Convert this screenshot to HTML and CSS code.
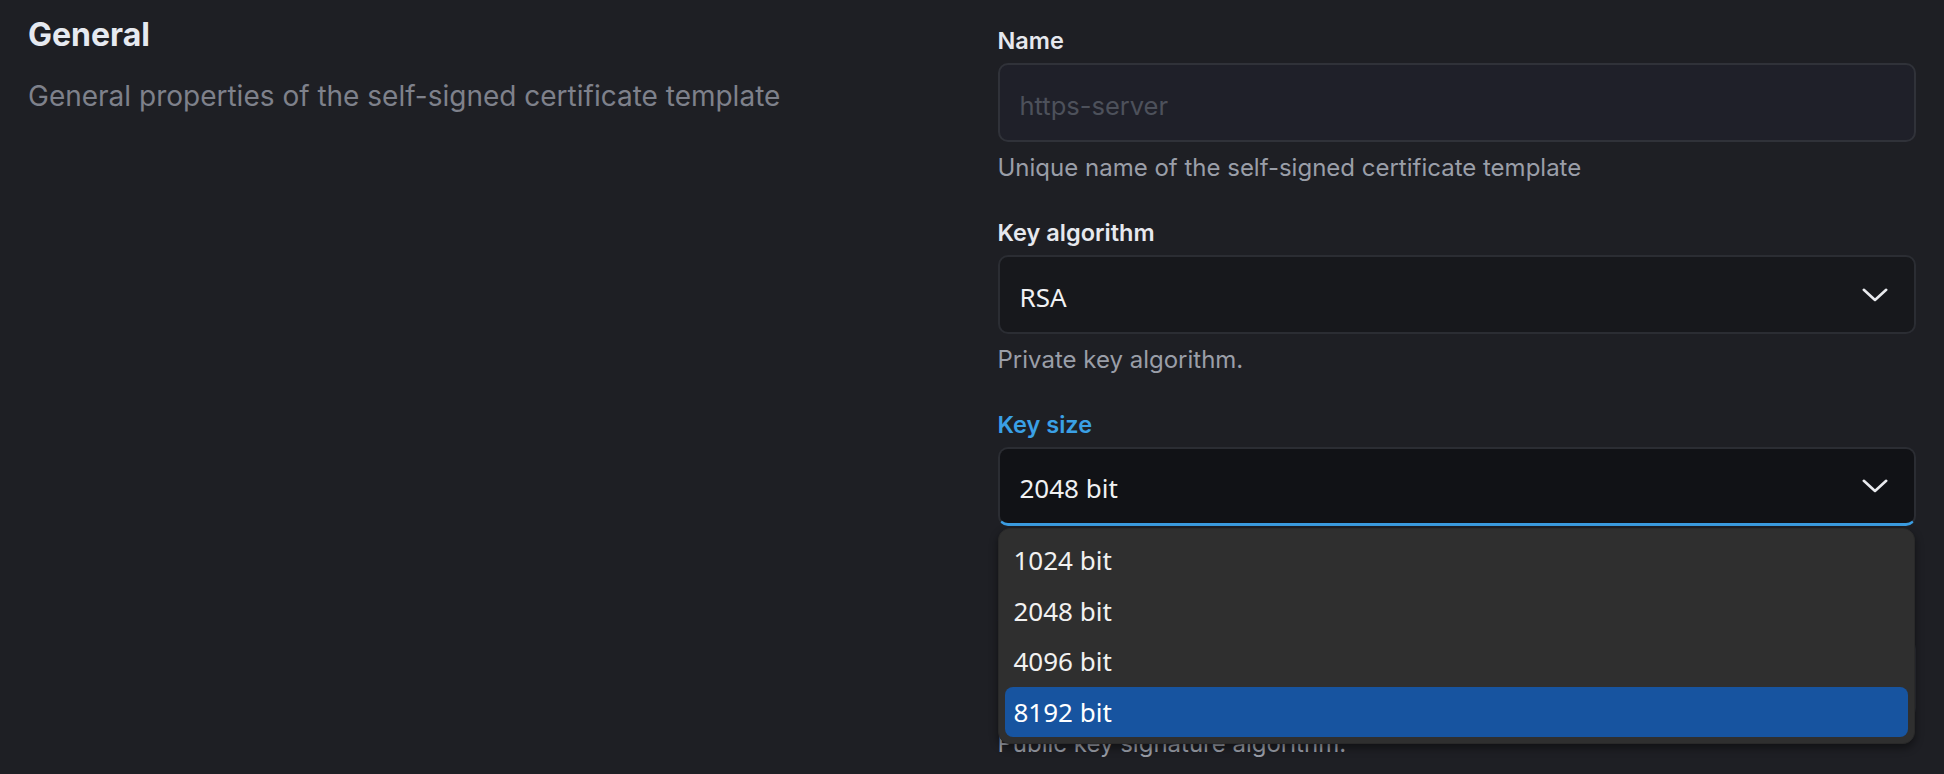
FILE: index.html
```html
<!DOCTYPE html>
<html lang="en">
<head>
<meta charset="utf-8">
<title>Self-signed certificate template</title>
<link rel="stylesheet" href="styles.css">
</head>
<body>
<div class="page">
  <section class="intro">
    <h2 class="title">General</h2>
    <p class="subtitle">General properties of the self-signed certificate template</p>
  </section>
  <section class="form">
    <div class="field">
      <label class="label">Name</label>
      <div class="input"><span class="placeholder">https-server</span></div>
      <p class="help">Unique name of the self-signed certificate template</p>
    </div>
    <div class="field">
      <label class="label">Key algorithm</label>
      <div class="select">
        <span class="value">RSA</span>
        <svg class="chevron" viewBox="0 0 26 14" width="26" height="14"><path d="M1.8 1.8 L13 12 L24.2 1.8"/></svg>
      </div>
      <p class="help">Private key algorithm.</p>
    </div>
    <div class="field">
      <label class="label label-active">Key size</label>
      <div class="select-wrap">
        <div class="select select-open">
          <span class="value">2048 bit</span>
          <svg class="chevron" viewBox="0 0 26 14" width="26" height="14"><path d="M1.8 1.8 L13 12 L24.2 1.8"/></svg>
        </div>
        <ul class="menu">
          <li class="option">1024 bit</li>
          <li class="option">2048 bit</li>
          <li class="option">4096 bit</li>
          <li class="option option-selected">8192 bit</li>
        </ul>
      </div>
      <p class="help">Private key size in bits.</p>
    </div>
    <div class="field">
      <label class="label">Signature algorithm</label>
      <div class="select">
        <span class="value">SHA-256</span>
        <svg class="chevron" viewBox="0 0 26 14" width="26" height="14"><path d="M1.8 1.8 L13 12 L24.2 1.8"/></svg>
      </div>
      <p class="help">Public key signature algorithm.</p>
    </div>
  </section>
</div>
</body>
</html>
```
FILE: styles.css
```css
html, body {
  margin: 0;
  padding: 0;
  background: #1e1f24;
  height: 774px;
  overflow: hidden;
}

body {
  font-family: Inter, "Liberation Sans", sans-serif;
}

.page {
  display: grid;
  grid-template-columns: 1fr 1fr;
  column-gap: 51px;
  padding: 17px 28px 0;
}

.title {
  margin: 0;
  font-size: 32px;
  line-height: 36px;
  font-weight: 700;
  color: #e6e9f0;
}

.subtitle {
  margin: 25px 0 0;
  font-size: 28px;
  line-height: 36px;
  font-weight: 400;
  color: #7e818b;
}

.form {
  display: flex;
  flex-direction: column;
  gap: 35px;
  padding-top: 9px;
}

.field {
  display: flex;
  flex-direction: column;
}

.label {
  display: block;
  font-size: 23.5px;
  line-height: 30px;
  font-weight: 600;
  color: #e6e8ee;
  margin-bottom: 7px;
}

.label-active {
  color: #3aa0e6;
}

.input {
  height: 79px;
  box-sizing: border-box;
  border: 2px solid #303239;
  border-radius: 10px;
  background: #1f2029;
  display: flex;
  align-items: center;
  padding: 6px 20px 0;
}

.placeholder {
  font-size: 25.5px;
  color: #4d515b;
}

.select-wrap {
  position: relative;
}

.select {
  height: 79px;
  box-sizing: border-box;
  border: 2px solid #2b2d33;
  border-radius: 10px;
  background: #17181c;
  display: flex;
  align-items: center;
  justify-content: space-between;
  padding: 4px 26px 0 20px;
  font-family: "Noto Sans", "Open Sans", sans-serif;
}

.select-open {
  background: #111216;
  border-bottom: 3px solid #3b9de2;
}

.value {
  font-size: 26px;
  color: #f0f1f3;
}

.chevron {
  fill: none;
  stroke: #e9eaee;
  stroke-width: 2.6;
  stroke-linecap: round;
  stroke-linejoin: round;
  margin-top: -4px;
}

.menu {
  position: absolute;
  top: calc(100% + 2px);
  left: 0;
  right: 1px;
  margin: 0;
  padding: 6px;
  list-style: none;
  background: #2f2f2f;
  border: 1px solid #292929;
  border-radius: 12px;
  box-shadow: 0 4px 8px rgba(0, 0, 0, 0.45);
  font-family: "Noto Sans", "Open Sans", sans-serif;
  z-index: 2;
}

.option {
  height: 50.5px;
  display: flex;
  align-items: center;
  padding: 0 9px;
  font-size: 26px;
  color: #f1f1f1;
  border-radius: 8px;
}

.option-selected {
  background: #1754a0;
  color: #ffffff;
}

.help {
  margin: 11px 0 0;
  font-size: 24px;
  line-height: 30px;
  color: #9a9ea8;
}
```
